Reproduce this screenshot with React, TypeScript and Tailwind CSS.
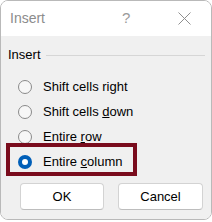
import React from "react";

const Radio: React.FC<{ checked?: boolean; children: React.ReactNode }> = ({ checked, children }) => (
  <div className="flex h-[25px] items-center">
    {checked ? (
      <span className="ml-[17px] flex h-[14px] w-[14px] items-center justify-center rounded-full bg-[#005fb8]">
        <span className="h-[6px] w-[6px] rounded-full bg-white" />
      </span>
    ) : (
      <span className="ml-[17px] h-[14px] w-[14px] rounded-full border border-[#8a8a8a] bg-[#f7f7f7]" />
    )}
    <span className="ml-[11px] text-[13px] text-black">{children}</span>
  </div>
);

export default function App() {
  return (
    <div className="h-[222px] w-[212px] bg-white" style={{ fontFamily: '"Liberation Sans", Arial, sans-serif' }}>
      <div className="relative flex h-[220px] w-[212px] flex-col overflow-hidden rounded-[8px] border border-[#b9b9b9]">
        {/* Title bar */}
        <div className="flex h-[35px] shrink-0 items-center bg-white">
          <span className="ml-[9px] text-[14px] text-[#8c8c8c]">Insert</span>
          <span className="ml-[77px] text-[15px] text-[#9a9a9a]">?</span>
          <svg className="ml-[48px]" width="13" height="13" viewBox="0 0 13 13">
            <path d="M0.5 0.5 L12.5 12.5 M12.5 0.5 L0.5 12.5" stroke="#8f8f8f" strokeWidth="1" fill="none" />
          </svg>
        </div>

        {/* Body */}
        <div className="flex flex-1 flex-col bg-[#f0f0f0]">
          <div className="mt-[11px] flex items-center">
            <span className="ml-[7px] text-[13px] leading-[16px] text-black">Insert</span>
            <span className="ml-[5px] mr-[6px] h-[1px] flex-1 bg-[#d6d6d6]" />
          </div>

          <div className="mt-[11px] flex flex-col">
            <Radio>
              Shift cells ri<u>g</u>ht
            </Radio>
            <Radio>
              Shift cells <u>d</u>own
            </Radio>
            <Radio>
              Entire <u>r</u>ow
            </Radio>
            <Radio checked>
              Entire <u>c</u>olumn
            </Radio>
          </div>

          <div className="mt-[9px] flex gap-[14px] pl-[19px]">
            <button className="h-[27px] w-[84px] rounded-[4px] border border-[#d3d3d3] border-b-[#bdbdbd] bg-white text-[13px] text-black">
              OK
            </button>
            <button className="h-[27px] w-[85px] rounded-[4px] border border-[#d3d3d3] border-b-[#bdbdbd] bg-white text-[13px] text-black">
              Cancel
            </button>
          </div>
        </div>

        {/* Highlight annotation */}
        <div className="absolute left-[5px] top-[142px] h-[33px] w-[131px] border-[4px] border-[#7a0c1d]" />
      </div>
    </div>
  );
}
